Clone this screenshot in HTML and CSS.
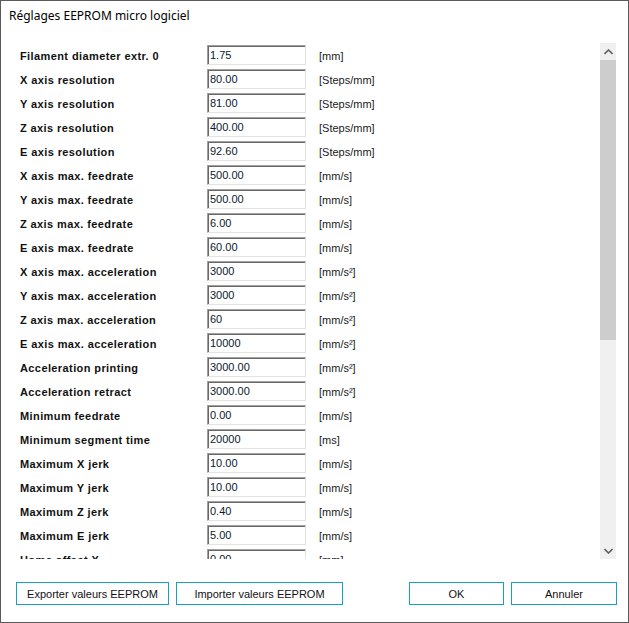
FILE: index.html
```html
<!DOCTYPE html>
<html>
<head>
<meta charset="utf-8">
<link rel="stylesheet" href="styles.css">
</head>
<body>
<div class="window">
  <div class="title">Réglages EEPROM micro logiciel</div>
  <div class="panel">
    <div class="content">
      <div class="row"><span class="label">Filament diameter extr. 0</span><span class="field">1.75</span><span class="unit">[mm]</span></div>
      <div class="row"><span class="label">X axis resolution</span><span class="field">80.00</span><span class="unit">[Steps/mm]</span></div>
      <div class="row"><span class="label">Y axis resolution</span><span class="field">81.00</span><span class="unit">[Steps/mm]</span></div>
      <div class="row"><span class="label">Z axis resolution</span><span class="field">400.00</span><span class="unit">[Steps/mm]</span></div>
      <div class="row"><span class="label">E axis resolution</span><span class="field">92.60</span><span class="unit">[Steps/mm]</span></div>
      <div class="row"><span class="label">X axis max. feedrate</span><span class="field">500.00</span><span class="unit">[mm/s]</span></div>
      <div class="row"><span class="label">Y axis max. feedrate</span><span class="field">500.00</span><span class="unit">[mm/s]</span></div>
      <div class="row"><span class="label">Z axis max. feedrate</span><span class="field">6.00</span><span class="unit">[mm/s]</span></div>
      <div class="row"><span class="label">E axis max. feedrate</span><span class="field">60.00</span><span class="unit">[mm/s]</span></div>
      <div class="row"><span class="label">X axis max. acceleration</span><span class="field">3000</span><span class="unit">[mm/s²]</span></div>
      <div class="row"><span class="label">Y axis max. acceleration</span><span class="field">3000</span><span class="unit">[mm/s²]</span></div>
      <div class="row"><span class="label">Z axis max. acceleration</span><span class="field">60</span><span class="unit">[mm/s²]</span></div>
      <div class="row"><span class="label">E axis max. acceleration</span><span class="field">10000</span><span class="unit">[mm/s²]</span></div>
      <div class="row"><span class="label">Acceleration printing</span><span class="field">3000.00</span><span class="unit">[mm/s²]</span></div>
      <div class="row"><span class="label">Acceleration retract</span><span class="field">3000.00</span><span class="unit">[mm/s²]</span></div>
      <div class="row"><span class="label">Minimum feedrate</span><span class="field">0.00</span><span class="unit">[mm/s]</span></div>
      <div class="row"><span class="label">Minimum segment time</span><span class="field">20000</span><span class="unit">[ms]</span></div>
      <div class="row"><span class="label">Maximum X jerk</span><span class="field">10.00</span><span class="unit">[mm/s]</span></div>
      <div class="row"><span class="label">Maximum Y jerk</span><span class="field">10.00</span><span class="unit">[mm/s]</span></div>
      <div class="row"><span class="label">Maximum Z jerk</span><span class="field">0.40</span><span class="unit">[mm/s]</span></div>
      <div class="row"><span class="label">Maximum E jerk</span><span class="field">5.00</span><span class="unit">[mm/s]</span></div>
      <div class="row"><span class="label">Home offset X</span><span class="field">0.00</span><span class="unit">[mm]</span></div>
    </div>
    <div class="scrollbar">
      <div class="arrow">
        <svg width="9" height="6" viewBox="0 0 9 6"><path d="M0.5 5 L4.5 1 L8.5 5" fill="none" stroke="#606060" stroke-width="1.6"/></svg>
      </div>
      <div class="thumb"></div>
      <div class="track"></div>
      <div class="arrow">
        <svg width="9" height="6" viewBox="0 0 9 6"><path d="M0.5 1 L4.5 5 L8.5 1" fill="none" stroke="#606060" stroke-width="1.6"/></svg>
      </div>
    </div>
  </div>
  <div class="buttons">
    <div class="group">
      <div class="btn btn-export">Exporter valeurs EEPROM</div>
      <div class="btn btn-import">Importer valeurs EEPROM</div>
    </div>
    <div class="group">
      <div class="btn btn-ok">OK</div>
      <div class="btn btn-cancel">Annuler</div>
    </div>
  </div>
</div>
</body>
</html>
```
FILE: styles.css
```css
* { box-sizing: border-box; }
html, body { margin: 0; padding: 0; background: #fff; }
.window {
  width: 629px;
  height: 623px;
  border: 1px solid #5a5a5a;
  background: #fff;
  display: flex;
  flex-direction: column;
  font-family: "Liberation Sans", Arial, sans-serif;
  color: #000;
}
.title {
  font-family: "Noto Sans", "Open Sans", sans-serif;
  font-size: 12px;
  line-height: 16px;
  padding: 7px 0 0 8px;
  height: 42px;
}
.panel {
  display: flex;
  height: 516px;
  margin-right: 12px;
}
.content {
  flex: 1;
  overflow: hidden;
  padding: 2px 0 0 19px;
}
.row {
  display: flex;
  align-items: center;
  height: 24px;
  padding-bottom: 4px;
}
.label {
  width: 187px;
  font-weight: bold;
  font-size: 11px;
  letter-spacing: 0.4px;
  color: #111;
  padding-top: 2px;
}
.field {
  width: 99px;
  height: 20px;
  border-top: 1px solid #a0a0a0;
  border-left: 1px solid #a0a0a0;
  border-right: 1px solid #e3e3e3;
  border-bottom: 1px solid #e3e3e3;
  box-shadow: inset 1px 1px 0 #696969;
  font-size: 11px;
  line-height: 18px;
  padding-left: 2px;
  color: #0a1a2e;
}
.unit {
  margin-left: 13px;
  font-size: 11px;
  color: #1a1a1a;
  padding-top: 2px;
}
.scrollbar {
  width: 16px;
  background: #f0f0f0;
  display: flex;
  flex-direction: column;
}
.arrow {
  height: 17px;
  display: flex;
  align-items: center;
  justify-content: center;
}
.thumb {
  height: 280px;
  background: #cdcdcd;
}
.track { flex: 1; }
.buttons {
  display: flex;
  justify-content: space-between;
  padding: 23px 11px 0 15px;
}
.group { display: flex; gap: 7px; }
.btn {
  height: 23px;
  border: 1px solid #17a0cc;
  font-size: 11px;
  display: flex;
  align-items: center;
  justify-content: center;
  color: #111;
}
.btn-export { width: 153px; }
.btn-import { width: 167px; }
.btn-ok { width: 95px; }
.btn-cancel { width: 106px; }
```
